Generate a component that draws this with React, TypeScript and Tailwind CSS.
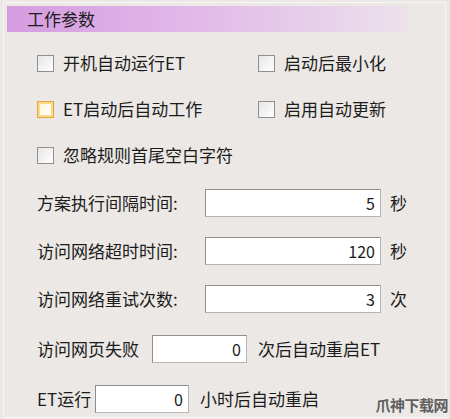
import React from "react";

const font = { fontFamily: '"Noto Sans CJK SC", "Noto Sans", sans-serif' };

function Check({ label, hot = false }: { label: string; hot?: boolean }) {
  return (
    <div className="flex items-center">
      <span
        className={
          hot
            ? "w-[17px] h-[17px] border border-[#e2a63c] bg-linear-to-br from-[#fff6d8] to-[#ffffff] shadow-[inset_0_0_0_2px_#f9d98a]"
            : "w-[17px] h-[17px] border border-[#8f8f8f] bg-linear-to-br from-[#e6e6e6] to-[#ffffff]"
        }
      />
      <span className="ml-[9px]">{label}</span>
    </div>
  );
}

function Field({ value, w }: { value: string; w: string }) {
  return (
    <div
      className={`${w} h-[28px] bg-white border border-[#b5b5b5] border-t-[#8e8e8e] border-l-[#8e8e8e] flex items-center justify-end pr-[5px] text-[16px]`}
    >
      {value}
    </div>
  );
}

export default function App() {
  return (
    <div
      className="relative w-[450px] h-[419px] bg-[#ebe8e5] text-[17px] text-[#1c1c1c] overflow-hidden"
      style={font}
    >
      <div className="ml-[3px] mt-[2px] w-[443px] h-[416px] border border-[#f8f6f4]">
        {/* header */}
        <div className="ml-[3px] mt-[3px] w-[401px] h-[26px] flex items-center pl-[20px] bg-linear-to-r from-[#d59ce0] via-[#e2bbe9] to-[#ece1eb]">
          工作参数
        </div>

        <div className="pl-[33px] mt-[8px]">
          {/* checkboxes */}
          <div className="flex h-[46px] items-center">
            <div className="w-[221px]">
              <Check label="开机自动运行ET" />
            </div>
            <Check label="启动后最小化" />
          </div>
          <div className="flex h-[46px] items-center">
            <div className="w-[221px]">
              <Check label="ET启动后自动工作" hot />
            </div>
            <Check label="启用自动更新" />
          </div>
          <div className="flex h-[46px] items-center">
            <Check label="忽略规则首尾空白字符" />
          </div>

          {/* fields */}
          <div className="flex h-[48px] items-center mt-[1px]">
            <span className="w-[168px]">方案执行间隔时间:</span>
            <Field value="5" w="w-[176px]" />
            <span className="ml-[9px]">秒</span>
          </div>
          <div className="flex h-[48px] items-center">
            <span className="w-[168px]">访问网络超时时间:</span>
            <Field value="120" w="w-[176px]" />
            <span className="ml-[9px]">秒</span>
          </div>
          <div className="flex h-[48px] items-center">
            <span className="w-[168px]">访问网络重试次数:</span>
            <Field value="3" w="w-[176px]" />
            <span className="ml-[9px]">次</span>
          </div>
          <div className="flex h-[52px] items-center">
            <span className="w-[115px]">访问网页失败</span>
            <Field value="0" w="w-[95px]" />
            <span className="ml-[11px]">次后自动重启ET</span>
          </div>
          <div className="flex h-[48px] items-center">
            <span className="w-[58px]">ET运行</span>
            <Field value="0" w="w-[94px]" />
            <span className="ml-[11px]">小时后自动重启</span>
          </div>
        </div>
      </div>

      <div className="absolute right-[2px] bottom-[3px] text-[15px] font-bold text-[#5f5f5f] tracking-[-0.5px]">
        爪神下载网
      </div>
    </div>
  );
}
